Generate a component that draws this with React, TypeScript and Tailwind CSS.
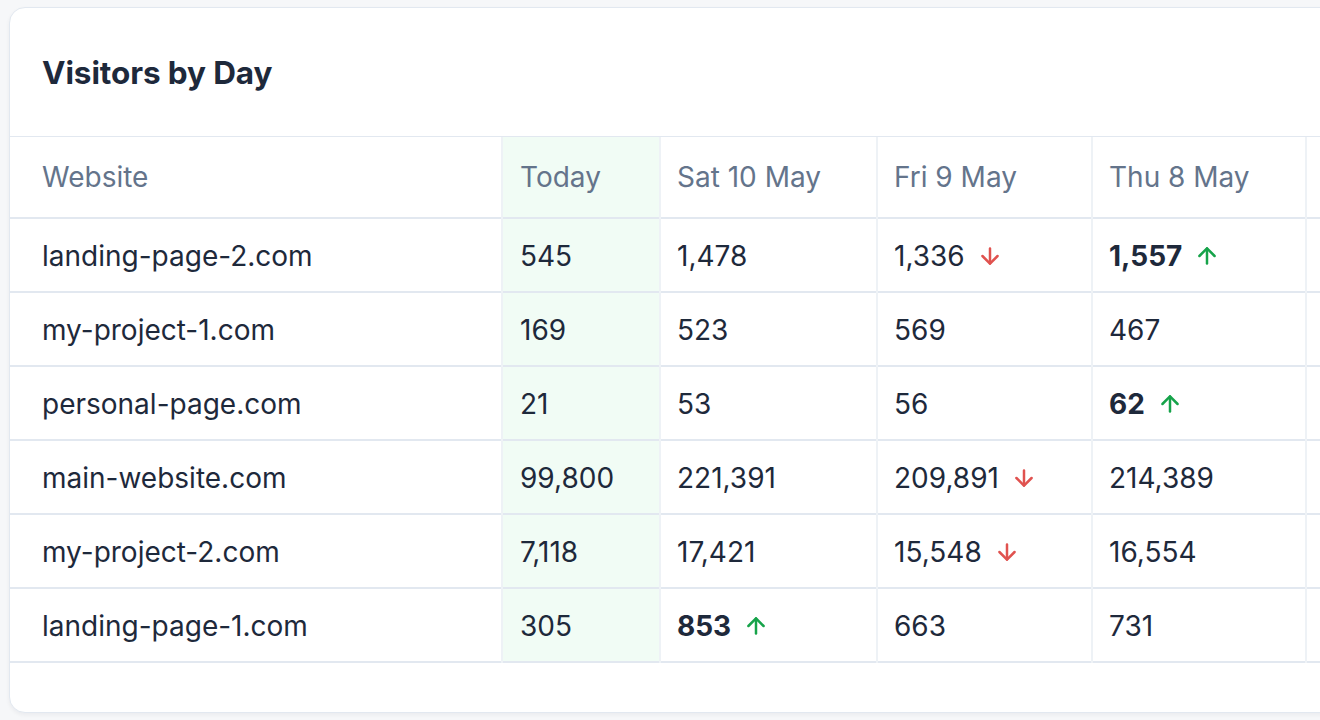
import { ArrowDown, ArrowUp } from "lucide-react"

type Trend = "up" | "down" | null

interface Cell {
  value: string
  trend?: Trend
}

interface Row {
  site: string
  today: string
  days: Cell[]
}

const columns = ["Sat 10 May", "Fri 9 May", "Thu 8 May"]

const rows: Row[] = [
  {
    site: "landing-page-2.com",
    today: "545",
    days: [
      { value: "1,478" },
      { value: "1,336", trend: "down" },
      { value: "1,557", trend: "up" },
    ],
  },
  {
    site: "my-project-1.com",
    today: "169",
    days: [{ value: "523" }, { value: "569" }, { value: "467" }],
  },
  {
    site: "personal-page.com",
    today: "21",
    days: [{ value: "53" }, { value: "56" }, { value: "62", trend: "up" }],
  },
  {
    site: "main-website.com",
    today: "99,800",
    days: [
      { value: "221,391" },
      { value: "209,891", trend: "down" },
      { value: "214,389" },
    ],
  },
  {
    site: "my-project-2.com",
    today: "7,118",
    days: [
      { value: "17,421" },
      { value: "15,548", trend: "down" },
      { value: "16,554" },
    ],
  },
  {
    site: "landing-page-1.com",
    today: "305",
    days: [{ value: "853", trend: "up" }, { value: "663" }, { value: "731" }],
  },
]

const dayWidths = ["w-[217px]", "w-[215px]", "w-[214px]"]

function TrendValue({ cell }: { cell: Cell }) {
  if (!cell.trend) return <span>{cell.value}</span>
  return (
    <span className="flex items-center">
      <span className={cell.trend === "up" ? "font-bold" : ""}>{cell.value}</span>
      {cell.trend === "up" ? (
        <ArrowUp size={26} strokeWidth={2.3} className="ml-[12px] text-[#16a34a]" />
      ) : (
        <ArrowDown size={26} strokeWidth={2.3} className="ml-[12px] text-[#e0524f]" />
      )}
    </span>
  )
}

export default function App() {
  return (
    <div
      className="w-[1320px] h-[720px] overflow-hidden bg-[#f6f7f9] pt-[7px] pl-[9px]"
      style={{ fontFamily: "Inter, 'Noto Sans', sans-serif" }}
    >
      <div className="w-[1600px] h-[706px] bg-white border border-[#e2e8f0] rounded-[16px] shadow-[0_2px_4px_rgba(15,23,42,0.05)] overflow-hidden">
        {/* header */}
        <div className="h-[129px] flex items-center pl-[32px] border-b border-[#e2e8f0]">
          <h2 className="text-[31.5px] font-bold text-[#1e293b] tracking-[-0.1px] pt-[2px]">
            Visitors by Day
          </h2>
        </div>

        <table className="table-fixed border-collapse text-[28px] text-[#1e293b]">
          <thead>
            <tr className="h-[81px] border-b-2 border-[#e2e8f0]">
              <th className="w-[492px] pl-[32px] text-left font-normal text-[#64748b] border-r-2 border-[#eef2f6]">
                Website
              </th>
              <th className="w-[158px] pl-[17px] text-left font-normal text-[#64748b] bg-[#f1fcf5] border-r-2 border-[#eef2f6]">
                Today
              </th>
              {columns.map((c, i) => (
                <th
                  key={c}
                  className={`${dayWidths[i]} pl-[16px] text-left font-normal text-[#64748b] border-r-2 border-[#eef2f6]`}
                >
                  {c}
                </th>
              ))}
              <th className="w-[214px] border-r-2 border-[#eef2f6]" />
            </tr>
          </thead>
          <tbody>
            {rows.map((r) => (
              <tr key={r.site} className="h-[74px] border-b-2 border-[#e2e8f0]">
                <td className="pl-[32px] pt-[2px] border-r-2 border-[#eef2f6]">{r.site}</td>
                <td className="pl-[17px] pt-[2px] bg-[#f1fcf5] border-r-2 border-[#eef2f6]">
                  {r.today}
                </td>
                {r.days.map((d, i) => (
                  <td key={i} className="pl-[16px] pt-[2px] border-r-2 border-[#eef2f6]">
                    <TrendValue cell={d} />
                  </td>
                ))}
                <td className="border-r-2 border-[#eef2f6]" />
              </tr>
            ))}
          </tbody>
        </table>
      </div>
    </div>
  )
}
